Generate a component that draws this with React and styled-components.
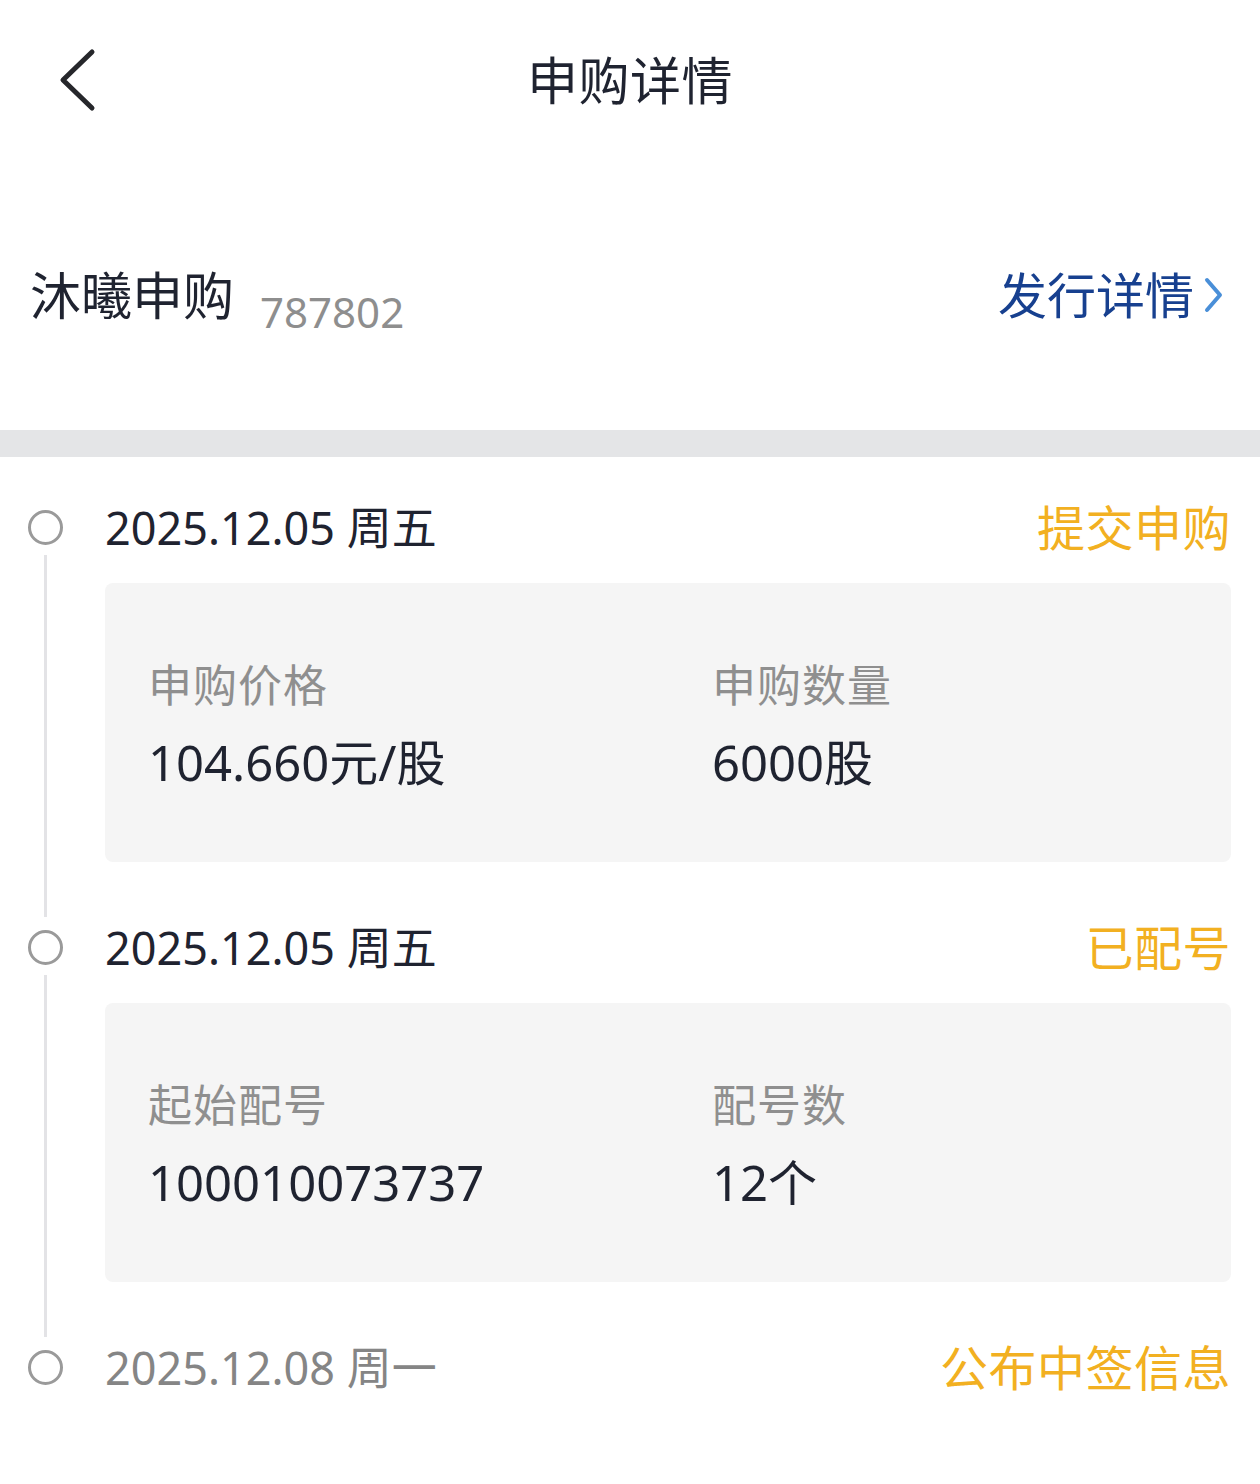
import React from 'react'
import styled, { createGlobalStyle } from 'styled-components'

const GlobalStyle = createGlobalStyle`
  html, body {
    margin: 0;
    padding: 0;
    background: #fff;
  }
  body {
    font-family: "Noto Sans", "Noto Sans CJK SC", sans-serif;
    color: #1f2330;
  }
`

const Page = styled.div`
  width: 1260px;
  min-height: 1484px;
  background: #fff;
`

const NavBar = styled.div`
  height: 160px;
  display: grid;
  grid-template-columns: 1fr auto 1fr;
  align-items: center;
`

const BackButton = styled.div`
  padding-left: 58px;
  display: flex;
  align-items: center;
  height: 62px;
`

const Title = styled.h1`
  margin: 0;
  font-size: 51px;
  font-weight: 400;
  line-height: 60px;
  color: #1f2330;
  letter-spacing: 0.5px;
`

const InfoRow = styled.div`
  height: 270px;
  display: flex;
  align-items: center;
  justify-content: space-between;
  padding: 0 36px 0 30px;
`

const NameGroup = styled.div`
  display: flex;
  align-items: center;
`

const StockName = styled.span`
  font-size: 51px;
  line-height: 60px;
  color: #1f2330;
`

const StockCode = styled.span`
  font-size: 42px;
  line-height: 50px;
  color: #8e8e8e;
  margin: 34px 0 0 26px;
`

const IssueLink = styled.a`
  display: flex;
  align-items: center;
  gap: 10px;
  font-size: 49px;
  line-height: 60px;
  color: #17408f;
  text-decoration: none;
`

const Band = styled.div`
  height: 27px;
  background: #e4e5e7;
`

const Timeline = styled.div`
  padding: 43px 29px 0 0;
`

const Item = styled.div`
  display: grid;
  grid-template-columns: 90px 1fr;
  column-gap: 15px;
`

const Rail = styled.div`
  display: flex;
  flex-direction: column;
  align-items: center;
  padding-top: 10px;
`

const Dot = styled.div`
  width: 35px;
  height: 35px;
  box-sizing: border-box;
  border: 3px solid #9a9a9a;
  border-radius: 50%;
  flex-shrink: 0;
`

const Line = styled.div`
  flex: 1;
  width: 3px;
  background: #e3e3e6;
  margin: 10px 0 3px;
`

const Body = styled.div`
  padding-bottom: ${p => (p.last ? '0' : '58px')};
`

const Header = styled.div`
  height: 56px;
  display: flex;
  align-items: center;
  justify-content: space-between;
`

const DateText = styled.span`
  font-size: 45px;
  line-height: 56px;
  color: ${p => (p.muted ? '#858585' : '#1f2330')};
`

const Status = styled.span`
  font-size: 48px;
  line-height: 56px;
  color: #f2b021;
  letter-spacing: 0.5px;
`

const Card = styled.div`
  margin-top: 27px;
  height: 279px;
  box-sizing: border-box;
  background: #f5f5f5;
  border-radius: 8px;
  padding: 74px 0 0 43px;
  display: grid;
  grid-template-columns: 564px 1fr;
`

const Field = styled.div`
  display: flex;
  flex-direction: column;
  gap: 19px;
`

const Label = styled.span`
  font-size: 44px;
  line-height: 56px;
  color: #8f8f8f;
  letter-spacing: 1px;
`

const Value = styled.span`
  font-size: 49px;
  line-height: 60px;
  color: #1f2330;
`

const BackIcon = () => (
  <svg width="40" height="64" viewBox="0 0 40 64" fill="none">
    <path d="M34 4 L5 32 L34 60" stroke="#26272b" strokeWidth="5" strokeLinecap="round" strokeLinejoin="round" />
  </svg>
)

const ChevronRight = () => (
  <svg width="20" height="36" viewBox="0 0 20 36" fill="none">
    <path d="M3 3 L16 18 L3 33" stroke="#4a8fd8" strokeWidth="4" strokeLinecap="round" strokeLinejoin="round" />
  </svg>
)

const steps = [
  {
    date: '2025.12.05 周五',
    status: '提交申购',
    fields: [
      { label: '申购价格', value: '104.660元/股' },
      { label: '申购数量', value: '6000股' },
    ],
  },
  {
    date: '2025.12.05 周五',
    status: '已配号',
    fields: [
      { label: '起始配号', value: '100010073737' },
      { label: '配号数', value: '12个' },
    ],
  },
  {
    date: '2025.12.08 周一',
    status: '公布中签信息',
    muted: true,
  },
]

const App = () => {
  return (
    <Page>
      <GlobalStyle />
      <NavBar>
        <BackButton>
          <BackIcon />
        </BackButton>
        <Title>申购详情</Title>
        <div />
      </NavBar>

      <InfoRow>
        <NameGroup>
          <StockName>沐曦申购</StockName>
          <StockCode>787802</StockCode>
        </NameGroup>
        <IssueLink href="#">
          发行详情
          <ChevronRight />
        </IssueLink>
      </InfoRow>

      <Band />

      <Timeline>
        {steps.map((step, i) => {
          const last = i === steps.length - 1
          return (
            <Item key={i}>
              <Rail>
                <Dot />
                {!last && <Line />}
              </Rail>
              <Body last={last}>
                <Header>
                  <DateText muted={step.muted}>{step.date}</DateText>
                  <Status>{step.status}</Status>
                </Header>
                {step.fields && (
                  <Card>
                    {step.fields.map(f => (
                      <Field key={f.label}>
                        <Label>{f.label}</Label>
                        <Value>{f.value}</Value>
                      </Field>
                    ))}
                  </Card>
                )}
              </Body>
            </Item>
          )
        })}
      </Timeline>
    </Page>
  )
}

export default App
